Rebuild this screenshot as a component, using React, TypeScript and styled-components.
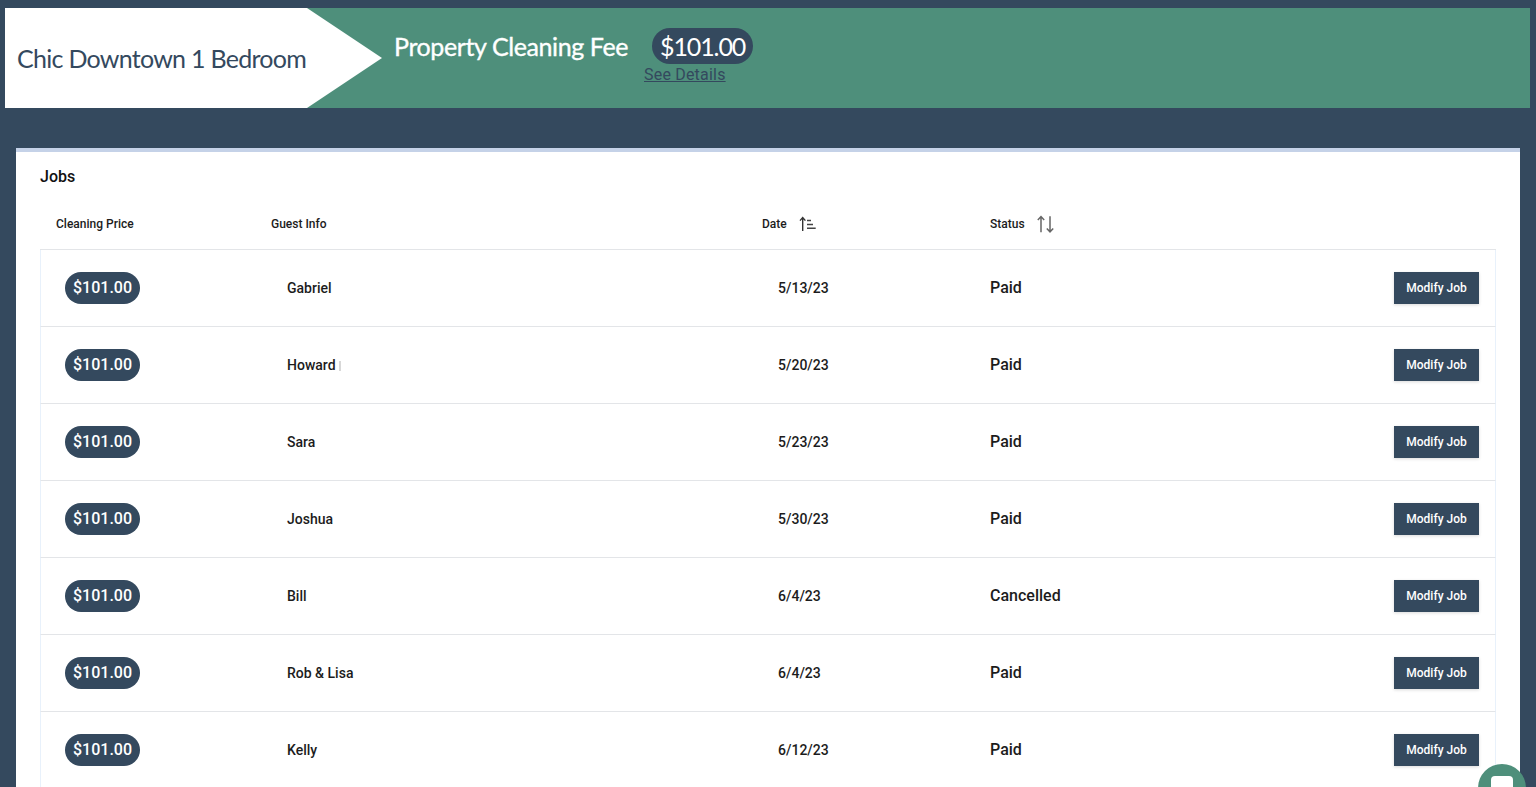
import styled, { createGlobalStyle } from 'styled-components';

const GlobalStyle = createGlobalStyle`
    html, body {
        margin: 0;
        height: 100%;
        overflow: hidden;
        background: #34495e;
    }
    body {
        padding: 8px 6px 0 5px;
        box-sizing: border-box;
        font-family: Roboto, "Liberation Sans", sans-serif;
    }
`;

const Banner = styled.header`
    display: flex;
    height: 100px;
    background: #4e8f7b;
`;

const PropertyTag = styled.div`
    display: flex;
    align-items: center;
    width: 377px;
    box-sizing: border-box;
    padding: 0 0 1px 12px;
    background: #fff;
    clip-path: polygon(0 0, 302px 0, 100% 50%, 302px 100%, 0 100%);
    font-family: Lato, sans-serif;
    font-size: 25px;
    letter-spacing: -0.72px;
    color: #34495e;
`;

const FeeTitle = styled.h1`
    margin: 20px 0 0 12px;
    width: 250px;
    font-family: Lato, sans-serif;
    font-size: 25px;
    line-height: 36px;
    font-weight: 400;
    letter-spacing: -0.4px;
    -webkit-text-stroke: 0.35px #fff;
    white-space: nowrap;
    color: #fff;
`;

const FeeGroup = styled.div`
    display: flex;
    flex-direction: column;
    align-items: flex-start;
    padding-top: 20px;
`;

const FeePill = styled.span`
    margin-left: 8px;
    padding: 0 8px;
    height: 36px;
    border-radius: 18px;
    background: #34495e;
    color: #fff;
    font-family: Lato, sans-serif;
    font-size: 25px;
    letter-spacing: -1.1px;
    line-height: 36px;
`;

const DetailsLink = styled.a`
    font-size: 16px;
    line-height: 22px;
    letter-spacing: 0.2px;
    color: #34495e;
    text-decoration: underline;
`;

const Card = styled.section`
    margin: 40px 10px 0 11px;
    padding: 0 24px;
    border-top: 4px solid #c5d2e8;
    background: #fff;
`;

const CardTitle = styled.h2`
    margin: 0;
    padding-top: 15px;
    height: 33px;
    font-size: 16px;
    line-height: 19px;
    font-weight: 500;
    color: #111;
`;

const columns = '215px 491px 228px 1fr auto';

const HeadRow = styled.div`
    display: grid;
    grid-template-columns: ${columns};
    align-items: center;
    height: 48px;
    padding: 0 0 1px 16px;
    border-bottom: 1px solid #e3e5e8;
`;

const HeadCell = styled.div`
    display: flex;
    align-items: center;
    gap: 12px;
    font-size: 12px;
    font-weight: 500;
    color: #1c1c1c;
`;

const Row = styled.div`
    display: grid;
    grid-template-columns: ${columns};
    align-items: center;
    height: 76px;
    padding: 0 16px 0 15px;
    border: 1px solid #e8f1fb;
    border-width: 0 1px;
    border-bottom: 1px solid #e3e5e8;
`;

const PriceCell = styled.div`
    padding-left: 9px;
`;

const PricePill = styled.span`
    display: inline-block;
    height: 32px;
    padding: 0 8px;
    border-radius: 16px;
    background: #34495e;
    color: #fff;
    font-size: 16px;
    font-weight: 500;
    line-height: 31px;
`;

const TextCell = styled.div`
    padding-left: 16px;
    font-size: 14px;
    font-weight: 500;
    color: #1c1c1c;
`;

const StatusCell = styled.div`
    padding-bottom: 2px;
    font-size: 16px;
    font-weight: 500;
    color: #1c1c1c;
`;

const Clipped = styled.span`
    display: inline-block;
    width: 2px;
    height: 10px;
    margin-left: 3px;
    background: #d8d8d8;
    vertical-align: -1px;
`;

const ModifyButton = styled.button`
    width: 85px;
    height: 32px;
    padding: 0;
    border: none;
    background: #34495e;
    box-shadow: 0 1px 3px rgba(0, 0, 0, 0.15);
    color: #fff;
    font-family: inherit;
    font-size: 12px;
    font-weight: 500;
`;

const ChatBubble = styled.div`
    position: fixed;
    left: 1478px;
    top: 764px;
    display: flex;
    justify-content: center;
    width: 48px;
    height: 48px;
    padding-top: 12px;
    box-sizing: border-box;
    border-radius: 50%;
    background: #4e8f7b;
`;

const ChatIcon = styled.span`
    width: 22px;
    height: 20px;
    border-radius: 4px;
    background: #fff;
`;

const SortedIcon = () => (
    <svg width="18" height="16" viewBox="0 0 18 16" fill="none" stroke="#333" strokeWidth="1.4">
        <path d="M3.7 15V2M1 4.6l2.7-3 2.7 3" />
        <path d="M8 4.5h4M8 8.5h6M8 12.2h8.7" stroke="#444" strokeWidth="1.6" />
    </svg>
);

const UnsortedIcon = () => (
    <svg width="18" height="20" viewBox="0 0 18 20" fill="none" stroke="#666" strokeWidth="1.5">
        <path d="M4 18.2V3M0.8 6l3.2-3.4L7.2 6" />
        <path d="M13 2.2V17.4M9.8 14.4l3.2 3.4 3.2-3.4" />
    </svg>
);

const jobs = [
    { guest: 'Gabriel', date: '5/13/23', status: 'Paid' },
    { guest: 'Howard', date: '5/20/23', status: 'Paid', clipped: true },
    { guest: 'Sara', date: '5/23/23', status: 'Paid' },
    { guest: 'Joshua', date: '5/30/23', status: 'Paid' },
    { guest: 'Bill', date: '6/4/23', status: 'Cancelled' },
    { guest: 'Rob & Lisa', date: '6/4/23', status: 'Paid' },
    { guest: 'Kelly', date: '6/12/23', status: 'Paid' },
];

export default function App() {
    return (
        <>
            <GlobalStyle />
            <Banner>
                <PropertyTag>Chic Downtown 1 Bedroom</PropertyTag>
                <FeeTitle>Property Cleaning Fee</FeeTitle>
                <FeeGroup>
                    <FeePill>$101.00</FeePill>
                    <DetailsLink href="#">See Details</DetailsLink>
                </FeeGroup>
            </Banner>
            <Card>
                <CardTitle>Jobs</CardTitle>
                <HeadRow>
                    <HeadCell>Cleaning Price</HeadCell>
                    <HeadCell>Guest Info</HeadCell>
                    <HeadCell>Date <SortedIcon /></HeadCell>
                    <HeadCell>Status <UnsortedIcon /></HeadCell>
                </HeadRow>
                {jobs.map((job) => (
                    <Row key={job.guest}>
                        <PriceCell><PricePill>$101.00</PricePill></PriceCell>
                        <TextCell>{job.guest}{job.clipped && <Clipped />}</TextCell>
                        <TextCell>{job.date}</TextCell>
                        <StatusCell>{job.status}</StatusCell>
                        <ModifyButton>Modify Job</ModifyButton>
                    </Row>
                ))}
            </Card>
            <ChatBubble><ChatIcon /></ChatBubble>
        </>
    );
}
